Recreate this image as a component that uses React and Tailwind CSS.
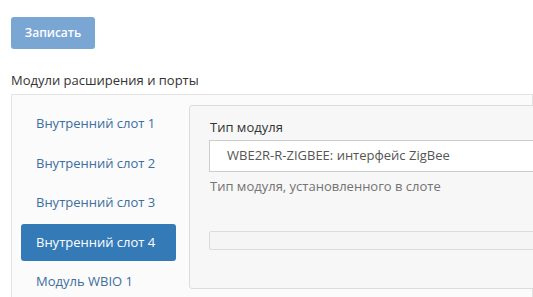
const tabs = [
  "Внутренний слот 1",
  "Внутренний слот 2",
  "Внутренний слот 3",
  "Внутренний слот 4",
  "Модуль WBIO 1",
];

const App = () => {
  const active = 3;

  return (
    <div
      className="w-[533px] h-[297px] overflow-hidden bg-white text-[13px] text-[#333]"
      style={{ fontFamily: '"Open Sans", "Liberation Sans", sans-serif' }}
    >
      <div className="pl-[11px] pt-[17px]">
        <button
          className="w-[84px] h-[32px] rounded-[3px] bg-[#7aa6d3] text-white text-[12px] font-semibold"
          disabled
        >
          Записать
        </button>
      </div>
      <div className="pl-[11px] mt-[22px] leading-[18px]">
        Модули расширения и порты
      </div>
      <div className="ml-[11px] mt-[5px] flex border border-[#e3e3e3] bg-[#fbfbfb] pt-[10px] pl-[9px] h-[220px]">
        <ul className="flex flex-col gap-[2.5px] w-[155px] shrink-0 pt-[0.5px]">
          {tabs.map((t, i) => (
            <li
              key={t}
              className={`h-[37px] flex items-center pl-[15px] rounded-[3px] ${
                i === active
                  ? "bg-[#337ab7] text-white font-medium"
                  : "text-[#3c6e9f]"
              }`}
            >
              {t}
            </li>
          ))}
        </ul>
        <div className="ml-[13px] flex-1 h-[184px] border border-[#dcdcdc] rounded-[3px] bg-[#f7f7f7] pl-[20px] pt-[12px] -mr-[40px]">
          <div className="leading-[18px] text-[#333]">Тип модуля</div>
          <div className="mt-[4px] -ml-[1px] h-[32px] flex items-center pl-[17px] bg-white border border-[#ccc] text-[#555]">
            WBE2R-R-ZIGBEE: интерфейс ZigBee
          </div>
          <div className="mt-[5px] leading-[18px] text-[#737373]">
            Тип модуля, установленного в слоте
          </div>
          <div className="mt-[36px] -ml-[1px] h-[19px] bg-[#f5f5f5] border border-[#dcdcdc] rounded-[2px]" />
        </div>
      </div>
    </div>
  );
};

export default App;
